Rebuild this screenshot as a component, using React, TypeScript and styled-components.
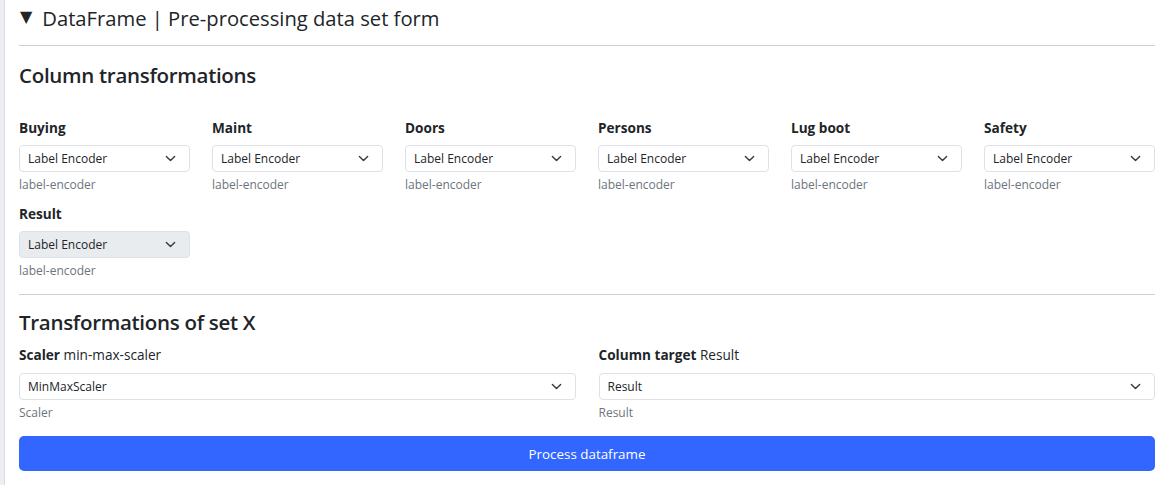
import * as React from "react";
import styled, { createGlobalStyle } from "styled-components";

const GlobalStyle = createGlobalStyle`
  html, body {
    margin: 0;
    padding: 0;
    background: #ffffff;
  }
  body {
    font-family: "Open Sans", "Noto Sans", sans-serif;
    color: #212529;
  }
`;

const Page = styled.div`
  display: flex;
  min-height: 485px;
`;

const SideRail = styled.div`
  width: 4px;
  flex: none;
  background: #eceef1;
  border-right: 1px solid #d8dbdf;
`;

const Content = styled.div`
  flex: 1;
  padding: 0 2px 0 14px;
  min-width: 0;
`;

const Details = styled.div`
  display: flex;
  flex-direction: column;
`;

const Summary = styled.div`
  display: flex;
  align-items: center;
  gap: 10px;
  height: 36px;
  font-size: 20.2px;
  font-weight: 400;
  color: #212529;
  padding-left: 1px;
`;

const Caret = styled.span`
  font-family: "DejaVu Sans", sans-serif;
  font-size: 16px;
  line-height: 1;
  transform: translateY(-1px);
`;

const Rule = styled.hr<{ $top: number; $bottom: number }>`
  border: 0;
  border-top: 1px solid #cfd1d3;
  margin: ${(p) => `${p.$top}px 0 ${p.$bottom}px`};
`;

const SectionTitle = styled.h4`
  margin: 0;
  font-size: 20.5px;
  font-weight: 600;
  line-height: 1.2;
  color: #212529;
  letter-spacing: -0.3px;
`;

const ColumnsGrid = styled.div`
  display: grid;
  grid-template-columns: repeat(6, 1fr);
  column-gap: 22px;
  row-gap: 11px;
  margin-top: 30px;
`;

const TwoGrid = styled.div`
  display: grid;
  grid-template-columns: 1fr 1fr;
  column-gap: 23px;
  margin-top: 11px;
`;

const Field = styled.div`
  display: flex;
  flex-direction: column;
`;

const Label = styled.div<{ $gap: number }>`
  font-size: 13.6px;
  line-height: 20px;
  font-weight: 400;
  color: #212529;
  margin-bottom: ${(p) => p.$gap}px;

  b {
    font-weight: 700;
  }
`;

const SelectBox = styled.div<{ $disabled?: boolean }>`
  display: flex;
  align-items: center;
  justify-content: space-between;
  height: 27px;
  box-sizing: border-box;
  padding: 0 13px 0 8px;
  border: 1px solid #dee2e6;
  border-radius: 4px;
  background: ${(p) => (p.$disabled ? "#e9ecef" : "#ffffff")};
  font-size: 12px;
  color: #212529;
`;

const Help = styled.div`
  font-size: 12px;
  line-height: 16px;
  color: #6c757d;
  margin-top: 5px;
`;

const SubmitButton = styled.button`
  display: block;
  width: 100%;
  height: 35px;
  margin-top: 15px;
  border: 0;
  border-radius: 5px;
  background: #3366ff;
  color: #ffffff;
  font-family: inherit;
  font-size: 13.4px;
`;

const Chevron = () => (
  <svg width="11" height="11" viewBox="0 0 16 16" fill="none">
    <path
      d="M2 5l6 6 6-6"
      stroke="#343a40"
      strokeWidth="2"
      strokeLinecap="round"
      strokeLinejoin="round"
    />
  </svg>
);

const Select: React.FC<{ value: string; disabled?: boolean }> = ({ value, disabled }) => (
  <SelectBox $disabled={disabled}>
    <span>{value}</span>
    <Chevron />
  </SelectBox>
);

const columns = ["Buying", "Maint", "Doors", "Persons", "Lug boot", "Safety", "Result"];

export default function App() {
  return (
    <>
      <GlobalStyle />
      <Page>
        <SideRail />
        <Content>
          <Details>
            <Summary>
              <Caret>▼</Caret>
              <span>DataFrame | Pre-processing data set form</span>
            </Summary>
            <Rule $top={9} $bottom={17} />

            <SectionTitle>Column transformations</SectionTitle>
            <ColumnsGrid>
              {columns.map((name) => (
                <Field key={name}>
                  <Label $gap={7}>
                    <b>{name}</b>
                  </Label>
                  <Select value="Label Encoder" disabled={name === "Result"} />
                  <Help>label-encoder</Help>
                </Field>
              ))}
            </ColumnsGrid>

            <Rule $top={15} $bottom={15} />
            <SectionTitle>Transformations of set X</SectionTitle>
            <TwoGrid>
              <Field>
                <Label $gap={8}>
                  <b>Scaler</b> min-max-scaler
                </Label>
                <Select value="MinMaxScaler" />
                <Help>Scaler</Help>
              </Field>
              <Field>
                <Label $gap={8}>
                  <b>Column target</b> Result
                </Label>
                <Select value="Result" />
                <Help>Result</Help>
              </Field>
            </TwoGrid>
            <SubmitButton type="button">Process dataframe</SubmitButton>
          </Details>
        </Content>
      </Page>
    </>
  );
}
